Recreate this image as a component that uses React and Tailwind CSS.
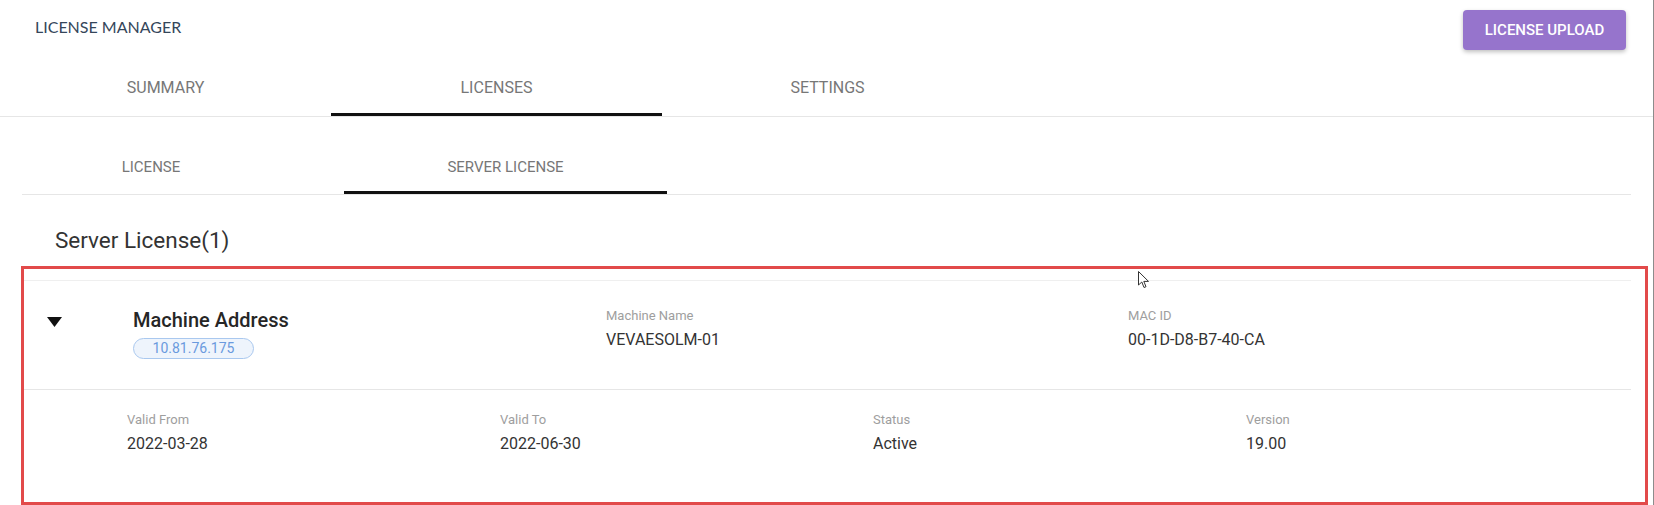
import { useState } from "react";

const topTabs = ["SUMMARY", "LICENSES", "SETTINGS"];

const details = [
  { label: "Valid From", value: "2022-03-28" },
  { label: "Valid To", value: "2022-06-30" },
  { label: "Status", value: "Active" },
  { label: "Version", value: "19.00" },
];

function Field({ label, value, className = "" }) {
  return (
    <div className={className}>
      <div className="text-[13px] leading-[16px] text-[#9e9e9e]">{label}</div>
      <div className="mt-[6px] text-[16px] leading-[20px] text-[#333]">{value}</div>
    </div>
  );
}

export default function App() {
  const [tab, setTab] = useState(1);
  const [subTab, setSubTab] = useState(1);

  return (
    <div className="relative w-[1654px] h-[505px] overflow-hidden bg-white border-r border-[#8c8c8c] font-[Roboto,sans-serif]">
      {/* header */}
      <div className="flex justify-between items-start h-[62px]">
        <div className="pl-[35px] pt-[18px] font-[Lato,sans-serif] text-[16px] leading-[18px] text-[#34465a]">
          LICENSE MANAGER
        </div>
        <button className="mt-[10px] mr-[27px] w-[163px] h-[40px] rounded-[4px] bg-[#9674cc] text-white text-[15px] font-medium shadow-[0_2px_4px_rgba(0,0,0,0.25)]">
          LICENSE UPLOAD
        </button>
      </div>

      {/* main tabs */}
      <div className="flex border-b border-[#e6e6e6]">
        {topTabs.map((t, i) => (
          <button
            key={t}
            onClick={() => setTab(i)}
            className={`w-[331px] h-[54px] flex items-center justify-center text-[16px] text-[#777] border-b-[3px] ${
              tab === i ? "border-[#111]" : "border-transparent"
            }`}
          >
            {t}
          </button>
        ))}
      </div>

      {/* sub tabs */}
      <div className="mx-[22px] mt-[27px] flex border-b border-[#e6e6e6]">
        <button
          onClick={() => setSubTab(0)}
          className={`w-[322px] h-[50px] pr-[64px] flex items-center justify-center text-[15px] text-[#777] border-b-[3px] ${
            subTab === 0 ? "border-[#111]" : "border-transparent"
          }`}
        >
          LICENSE
        </button>
        <button
          onClick={() => setSubTab(1)}
          className={`w-[323px] h-[50px] flex items-center justify-center text-[15px] text-[#777] border-b-[3px] ${
            subTab === 1 ? "border-[#111]" : "border-transparent"
          }`}
        >
          SERVER LICENSE
        </button>
      </div>

      <div className="pl-[55px] pt-[32px] text-[22.5px] leading-[26px] text-[#333]">
        Server License(1)
      </div>

      {/* highlighted card */}
      <div className="mt-[13px] ml-[21px] w-[1627px] h-[239px] border-[3px] border-[#e24a4a] pt-[11px] pr-[14px]">
        <div className="h-full bg-white border-t border-[#efefef]">
          <div className="flex h-[109px] border-b border-[#e6e6e6]">
            <div className="w-[109px] pl-[23px] pt-[36px]">
              <svg width="15" height="10" viewBox="0 0 15 10">
                <polygon points="0,0 15,0 7.5,10" fill="#111" />
              </svg>
            </div>
            <div className="w-[473px] pt-[28px]">
              <div className="text-[20px] leading-[22px] font-medium text-[#262626]">Machine Address</div>
              <span className="mt-[7px] inline-flex items-center justify-center w-[121px] h-[21px] rounded-full border border-[#a9c8ef] bg-[#eef4fc] text-[14px] text-[#6a9ade]">
                10.81.76.175
              </span>
            </div>
            <Field className="w-[522px] pt-[27px]" label="Machine Name" value="VEVAESOLM-01" />
            <Field className="pt-[27px]" label="MAC ID" value="00-1D-D8-B7-40-CA" />
          </div>
          <div className="flex pl-[103px] pt-[22px]">
            {details.map((d) => (
              <Field key={d.label} className="w-[373px]" label={d.label} value={d.value} />
            ))}
          </div>
        </div>
      </div>

      {/* mouse pointer */}
      <svg className="absolute left-[1138px] top-[271px]" width="12" height="18" viewBox="0 0 12 18">
        <path d="M0.5 0.5 L0.5 14 L3.8 11 L6 16.5 L8 15.7 L5.8 10.4 L10.5 10.4 Z" fill="#fff" stroke="#333" strokeWidth="1" />
      </svg>
    </div>
  );
}
